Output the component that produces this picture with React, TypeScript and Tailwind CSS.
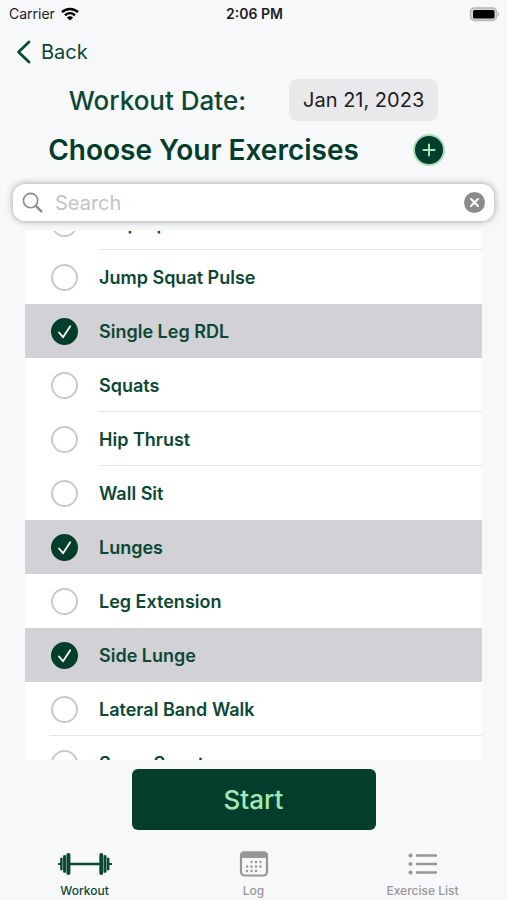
import React, { useLayoutEffect, useRef, useState } from "react";

interface Exercise {
  name: string;
  divider?: string;
}

const EXERCISES: Exercise[] = [
  { name: "Step Ups", divider: "left-[74px]" },
  { name: "Jump Squat Pulse" },
  { name: "Single Leg RDL" },
  { name: "Squats", divider: "left-[74px]" },
  { name: "Hip Thrust", divider: "left-[74px]" },
  { name: "Wall Sit" },
  { name: "Lunges" },
  { name: "Leg Extension" },
  { name: "Side Lunge" },
  { name: "Lateral Band Walk", divider: "left-[25px]" },
  { name: "Sumo Squat" },
];

const StatusBar: React.FC = () => (
  <div className="grid grid-cols-3 items-center h-7 pl-[9px] pr-[7px] text-sm text-[#1c1c1e]">
    <div className="flex items-center gap-[6px]">
      <span>Carrier</span>
      <svg viewBox="0 0 18 14" className="w-[18px] h-[14px]" fill="none" stroke="#000">
        <path d="M1 5.2C5.5.9 12.5.9 17 5.2" strokeWidth="2.5" />
        <path d="M4 8.3c3-2.8 7-2.8 10 0" strokeWidth="2.3" />
        <path d="M9 13.6 5.9 10.5c1.8-1.6 4.4-1.6 6.2 0z" fill="#000" stroke="none" />
      </svg>
    </div>
    <span className="text-center font-semibold whitespace-nowrap">2:06 PM</span>
    <svg viewBox="0 0 31 15" className="w-[31px] h-[15px] justify-self-end">
      <rect x="1.5" y="1" width="26" height="12.5" rx="4" fill="#d6d7d7" stroke="#b4b5b5" strokeWidth="1.4" />
      <rect x="4" y="3" width="21.5" height="8.5" rx="1.5" fill="#000" />
      <path d="M28.800 5.100c2 .5 2 3.800 0 4.300z" fill="#b4b5b5" />
    </svg>
  </div>
);

const ExerciseRow: React.FC<{
  exercise: Exercise;
  checked: boolean;
  onToggle: () => void;
}> = ({ exercise, checked, onToggle }) => (
  <li className={checked ? "relative bg-[#d1d1d6]" : "relative bg-white"}>
    <label className="flex items-center h-[54px] pl-[26px] gap-[21px] cursor-pointer">
      <span className="relative flex shrink-0 size-[27px]">
        <input
          type="checkbox"
          checked={checked}
          onChange={onToggle}
          className="appearance-none size-full rounded-full border-2 border-[#c9c9cc] bg-white checked:border-[#033d2b] checked:bg-[#033d2b]"
        />
        {checked && (
          <svg
            viewBox="0 0 27 27"
            className="absolute inset-0 pointer-events-none"
            fill="none"
            stroke="#fff"
            strokeWidth="1.8"
            strokeLinecap="round"
            strokeLinejoin="round"
          >
            <path d="m8 14.5 4 4.700 7.200-11" />
          </svg>
        )}
      </span>
      <span className="pt-px text-lg font-semibold text-[#0d4834]">{exercise.name}</span>
    </label>
    {exercise.divider && (
      <div className={`absolute bottom-0 right-0 h-px bg-[#e4e4e6] ${exercise.divider}`} />
    )}
  </li>
);

const DumbbellIcon: React.FC = () => (
  <svg viewBox="0 0 54 24" className="w-[54px] h-6" fill="none" stroke="currentColor" strokeLinecap="round">
    <path d="M.8 12H3M12 12h29M51 12h2.200" strokeWidth="2" />
    <path d="M12 12h29" strokeWidth="2.600" />
    <path d="M10.400 3v18M43.300 3v18" strokeWidth="4" />
    <path d="M6.500 4.400v15.200M47.100 4.400v15.200" strokeWidth="2.900" />
    <path d="M3.400 6.800v10.400M50.200 6.800v10.400" strokeWidth="2.500" />
  </svg>
);

const CalendarIcon: React.FC = () => (
  <svg viewBox="0 0 30 26" className="w-[30px] h-[26px]">
    <rect x="2" y="1.5" width="26" height="23" rx="3.5" fill="none" stroke="currentColor" strokeWidth="2.2" />
    <path d="M1 7V4.500a4 4 0 0 1 4-4h20a4 4 0 0 1 4 4V7z" fill="currentColor" />
    <g fill="currentColor">
      <circle cx="12.5" cy="11" r="1.2" />
      <circle cx="17" cy="11" r="1.2" />
      <circle cx="21.5" cy="11" r="1.2" />
      <circle cx="8" cy="15.5" r="1.2" />
      <circle cx="12.5" cy="15.5" r="1.2" />
      <circle cx="17" cy="15.5" r="1.2" />
      <circle cx="21.5" cy="15.5" r="1.2" />
      <circle cx="8" cy="20" r="1.2" />
      <circle cx="12.5" cy="20" r="1.2" />
      <circle cx="17" cy="20" r="1.2" />
    </g>
  </svg>
);

const ListIcon: React.FC = () => (
  <svg viewBox="0 0 30 24" className="w-[30px] h-6">
    <path d="M9 3.500h19M9 12h19M9 20.500h19" stroke="currentColor" strokeWidth="2.4" strokeLinecap="round" />
    <g fill="currentColor">
      <circle cx="2.5" cy="3.5" r="2" />
      <circle cx="2.5" cy="12" r="2" />
      <circle cx="2.5" cy="20.5" r="2" />
    </g>
  </svg>
);

const TABS = [
  { label: "Workout", icon: <DumbbellIcon /> },
  { label: "Log", icon: <CalendarIcon /> },
  { label: "Exercise List", icon: <ListIcon /> },
];

export default function App() {
  const [selected, setSelected] = useState(["Single Leg RDL", "Lunges", "Side Lunge"]);
  const [query, setQuery] = useState("");
  const listRef = useRef<HTMLUListElement>(null);

  useLayoutEffect(() => {
    if (listRef.current) listRef.current.scrollTop = 35;
  }, []);

  const toggle = (name: string) =>
    setSelected((prev) =>
      prev.includes(name) ? prev.filter((n) => n !== name) : [...prev, name]
    );

  return (
    <div className="flex flex-col h-screen bg-[#f6f8fa] font-['Inter',sans-serif] text-[#0d4834]">
      <StatusBar />

      <header className="flex items-center h-12 px-4">
        <button className="flex items-center gap-[10px] text-xl cursor-pointer">
          <svg viewBox="0 0 15 24" className="w-[15px] h-6" fill="none" stroke="currentColor" strokeWidth="2.8" strokeLinecap="round" strokeLinejoin="round">
            <path d="M13 2 2.500 12 13 22" />
          </svg>
          Back
        </button>
      </header>

      <div className="flex items-center justify-center gap-[43px] h-12">
        <span className="text-[26px] font-medium">Workout Date:</span>
        <button className="h-[42px] px-[14px] rounded-lg bg-[#e9e9eb] text-xl text-[#1c1c1e] cursor-pointer">
          Jan 21, 2023
        </button>
      </div>

      <div className="flex items-center justify-center gap-[54px] h-[52px] pr-[14px]">
        <h1 className="text-[28px] font-semibold text-[#033d2b]">Choose Your Exercises</h1>
        <button
          aria-label="Add exercise"
          className="flex items-center justify-center shrink-0 size-8 rounded-full border-2 border-[#a5dfb4] bg-[#033d2b] text-[#a5e8b5] cursor-pointer"
        >
          <svg viewBox="0 0 16 16" className="size-4" stroke="currentColor" strokeWidth="2" strokeLinecap="round">
            <path d="M8 2.500v11M2.500 8h11" />
          </svg>
        </button>
      </div>

      <div className="flex items-center shrink-0 h-[37px] mt-2 mx-[13px] px-[9px] gap-3 rounded-xl bg-white shadow-[0_0_7px_rgba(0,0,0,0.38)]">
        <svg viewBox="0 0 22 22" className="size-[21px] shrink-0 text-[#8b8b8e]" fill="none" stroke="currentColor" strokeLinecap="round">
          <circle cx="9" cy="9" r="7.5" strokeWidth="1.7" />
          <path d="m14.800 14.800 5.500 5.500" strokeWidth="2.5" />
        </svg>
        <input
          type="text"
          aria-label="Search"
          placeholder="Search"
          value={query}
          onChange={(e) => setQuery(e.target.value)}
          className="flex-1 min-w-0 text-xl outline-none placeholder:text-[#c3c3c6]"
        />
        <button aria-label="Clear search" onClick={() => setQuery("")} className="shrink-0 cursor-pointer">
          <svg viewBox="0 0 21 21" className="size-[21px]">
            <circle cx="10.5" cy="10.5" r="10.5" fill="#8b8b8e" />
            <path d="m7 7 7 7M14 7l-7 7" stroke="#fff" strokeWidth="2" strokeLinecap="round" />
          </svg>
        </button>
      </div>

      <ul
        ref={listRef}
        className="flex-1 min-h-0 mt-[10px] mx-[25px] overflow-y-auto bg-white [scrollbar-width:none]"
      >
        {EXERCISES.map((exercise) => (
          <ExerciseRow
            key={exercise.name}
            exercise={exercise}
            checked={selected.includes(exercise.name)}
            onToggle={() => toggle(exercise.name)}
          />
        ))}
      </ul>

      <div className="flex justify-center mt-[9px]">
        <button className="w-[244px] h-[61px] rounded-md bg-[#033d2b] text-[26px] font-medium text-[#a5e8b5] cursor-pointer">
          Start
        </button>
      </div>

      <nav className="grid grid-cols-3 h-[70px] pt-5 text-xs font-medium text-[#97979a]">
        {TABS.map((tab, i) => (
          <a
            key={tab.label}
            href="#"
            className={
              i === 0
                ? "flex flex-col items-center gap-[6px] text-[#0d4834]"
                : "flex flex-col items-center gap-[6px]"
            }
          >
            <span className="flex items-center h-[27px]">{tab.icon}</span>
            <span className="leading-4">{tab.label}</span>
          </a>
        ))}
      </nav>
    </div>
  );
}
